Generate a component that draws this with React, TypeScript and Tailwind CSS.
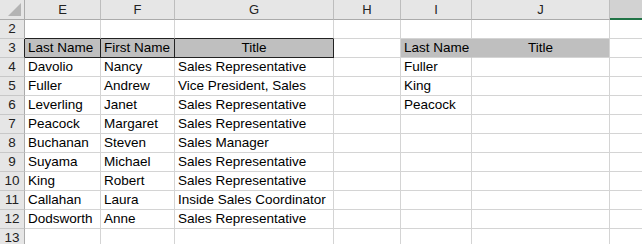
import React from "react";

const cols = ["E", "F", "G", "H", "I", "J", ""];

type Cell = { t?: string; align?: "l" | "c" };

const data: { n: number; cells: Cell[] }[] = [
  { n: 2, cells: [{}, {}, {}, {}, {}, {}, {}] },
  {
    n: 3,
    cells: [
      { t: "Last Name" },
      { t: "First Name" },
      { t: "Title", align: "c" },
      {},
      { t: "Last Name" },
      { t: "Title", align: "c" },
      {},
    ],
  },
  { n: 4, cells: [{ t: "Davolio" }, { t: "Nancy" }, { t: "Sales Representative" }, {}, { t: "Fuller" }, {}, {}] },
  { n: 5, cells: [{ t: "Fuller" }, { t: "Andrew" }, { t: "Vice President, Sales" }, {}, { t: "King" }, {}, {}] },
  { n: 6, cells: [{ t: "Leverling" }, { t: "Janet" }, { t: "Sales Representative" }, {}, { t: "Peacock" }, {}, {}] },
  { n: 7, cells: [{ t: "Peacock" }, { t: "Margaret" }, { t: "Sales Representative" }, {}, {}, {}, {}] },
  { n: 8, cells: [{ t: "Buchanan" }, { t: "Steven" }, { t: "Sales Manager" }, {}, {}, {}, {}] },
  { n: 9, cells: [{ t: "Suyama" }, { t: "Michael" }, { t: "Sales Representative" }, {}, {}, {}, {}] },
  { n: 10, cells: [{ t: "King" }, { t: "Robert" }, { t: "Sales Representative" }, {}, {}, {}, {}] },
  { n: 11, cells: [{ t: "Callahan" }, { t: "Laura" }, { t: "Inside Sales Coordinator" }, {}, {}, {}, {}] },
  { n: 12, cells: [{ t: "Dodsworth" }, { t: "Anne" }, { t: "Sales Representative" }, {}, {}, {}, {}] },
  { n: 13, cells: [{}, {}, {}, {}, {}, {}, {}] },
];

export default function App() {
  return (
    <div
      className="w-[642px] h-[244px] overflow-hidden bg-white text-black"
      style={{ fontFamily: '"Liberation Sans", Arial, sans-serif' }}
    >
      <div className="grid grid-cols-[25px_76px_74px_159px_67px_71px_138px_40px]">
        <div className="h-[20px] bg-[#e6e6e6] border-r border-b border-[#ababab] relative">
          <div className="absolute right-[3px] bottom-[3px] w-0 h-0 border-l-[13px] border-l-transparent border-b-[13px] border-b-[#b4b4b4]" />
        </div>
        {cols.map((c, i) =>
          i === 6 ? (
            <div key={i} className="h-[20px] bg-[#d2d2d2] border-b-2 border-b-[#217346]" />
          ) : (
            <div
              key={i}
              className="h-[20px] bg-[#e6e6e6] border-r border-r-[#bdbdbd] border-b border-b-[#ababab] flex items-center justify-center pt-[1px] text-[13px] text-[#222]"
            >
              {c}
            </div>
          )
        )}
        {data.map((row) => (
          <React.Fragment key={row.n}>
            <div
              className={`h-[19px] bg-[#e6e6e6] border-r border-b border-b-[#c8c8c8] flex items-center justify-center pt-[1px] text-[13.5px] text-[#222] ${
                row.n === 3 ? "border-r-[#222]" : "border-r-[#ababab]"
              }`}
            >
              {row.n}
            </div>
            {row.cells.map((c, i) => {
              const inTbl = row.n === 3 && i <= 2;
              const aboveTbl = row.n === 2 && i <= 2;
              const grayFill = row.n === 3 && (i <= 2 || i === 4 || i === 5);
              let br = "border-r-[#d4d4d4]";
              let bb = "border-b-[#d4d4d4]";
              if (inTbl) {
                br = "border-r-[#222]";
                bb = "border-b-[#222]";
              }
              if (aboveTbl) bb = "border-b-[#222]";
              if (row.n === 3 && i === 4) br = "border-r-[#bfbfbf]";
              return (
                <div
                  key={i}
                  className={`h-[19px] border-r border-b ${br} ${bb} ${grayFill ? "bg-[#bfbfbf]" : ""} flex items-center whitespace-nowrap px-[3px] pt-[1px] text-[13.5px] ${
                    c.align === "c" ? "justify-center" : ""
                  }`}
                >
                  {c.t}
                </div>
              );
            })}
          </React.Fragment>
        ))}
      </div>
    </div>
  );
}
